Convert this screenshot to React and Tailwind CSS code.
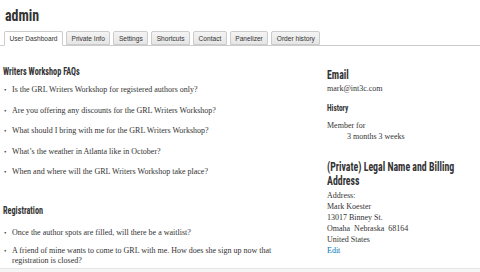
import React from "react";

const heading = "font-['Liberation_Sans_Narrow','Roboto_Condensed','Liberation_Sans',sans-serif] font-bold text-[#333]";
const squeeze = "block origin-left scale-x-[0.82] whitespace-nowrap";
const serif = "font-['Liberation_Serif','DejaVu_Serif',serif] text-[#333]";

const tabs = ["User Dashboard", "Private Info", "Settings", "Shortcuts", "Contact", "Panelizer", "Order history"];

const faqs = [
  "Is the GRL Writers Workshop for registered authors only?",
  "Are you offering any discounts for the GRL Writers Workshop?",
  "What should I bring with me for the GRL Writers Workshop?",
  "What’s the weather in Atlanta like in October?",
  "When and where will the GRL Writers Workshop take place?",
];

const registration = [
  "Once the author spots are filled, will there be a waitlist?",
  "A friend of mine wants to come to GRL with me. How does she sign up now that registration is closed?",
];

const Faq = ({ text }) => (
  <li className="flex gap-[4px] leading-[10px]">
    <span className="w-[4px] shrink-0 text-[7px]">•</span>
    <span>{text}</span>
  </li>
);

export default function App() {
  return (
    <div className="w-[480px] h-[272px] overflow-hidden bg-white relative">
      <h1 className={`${heading} text-[17px] leading-[24px] pl-[5px] pt-[3px]`}>
        <span className={squeeze}>admin</span>
      </h1>

      {/* tabs */}
      <div className="flex items-end gap-[3px] pl-[4px] mt-[5px] border-b border-[#ccc] h-[14px]">
        {tabs.map((t, i) => (
          <div
            key={t}
            className={`h-[14px] px-[4.5px] text-[6.6px] leading-[13px] font-['Liberation_Sans',sans-serif] text-[#333] border border-[#ccc] rounded-t-[2px] ${
              i === 0 ? "bg-white border-b-white -mb-px h-[15px]" : "bg-gradient-to-b from-[#f4f4f4] to-[#e6e6e6]"
            }`}
          >
            {t}
          </div>
        ))}
      </div>

      <div className="flex">
        {/* left column */}
        <div className="w-[320px] shrink-0 pl-[3px]">
          <h2 className={`${heading} text-[10px] leading-[12px] mt-[20px]`}>
            <span className={squeeze}>Writers Workshop FAQs</span>
          </h2>
          <ul className={`${serif} text-[8px] flex flex-col gap-[10.5px] pl-[1px] mt-[7px]`}>
            {faqs.map((f) => (
              <Faq key={f} text={f} />
            ))}
          </ul>
          <h2 className={`${heading} text-[10px] leading-[12px] mt-[28px]`}>
            <span className={squeeze}>Registration</span>
          </h2>
          <ul className={`${serif} text-[8px] flex flex-col gap-[8px] pl-[1px] mt-[11px] w-[300px]`}>
            {registration.map((f) => (
              <Faq key={f} text={f} />
            ))}
          </ul>
        </div>

        {/* right column */}
        <div className="flex-1 min-w-0 pl-[7px] pr-[10px]">
          <h3 className={`${heading} text-[12px] leading-[14px] mt-[22px]`}>
            <span className={squeeze}>Email</span>
          </h3>
          <p className={`${serif} text-[8px] leading-[10px] mt-[2px]`}>mark@int3c.com</p>
          <h4 className={`${heading} text-[9px] leading-[11px] mt-[9px]`}>
            <span className={squeeze}>History</span>
          </h4>
          <div className={`${serif} text-[8px] leading-[11px] mt-[6px]`}>
            <p>Member for</p>
            <p className="pl-[20px]">3 months 3 weeks</p>
          </div>
          <h3 className={`${heading} text-[12px] leading-[14px] mt-[18px]`}>
            <span className={squeeze}>(Private) Legal Name and Billing</span>
            <span className={squeeze}>Address</span>
          </h3>
          <div className={`${serif} text-[8px] leading-[11px] mt-[2px]`}>
            <p>Address:</p>
            <p>Mark Koester</p>
            <p>13017 Binney St.</p>
            <p>Omaha&nbsp; Nebraska&nbsp; 68164</p>
            <p>United States</p>
            <p className="text-[#0074bd]">Edit</p>
          </div>
        </div>
      </div>

      <div className="absolute left-0 right-0 top-[268px] h-[4px] border-t border-[#e5e5e5] bg-[#f5f5f5]" />
    </div>
  );
}
